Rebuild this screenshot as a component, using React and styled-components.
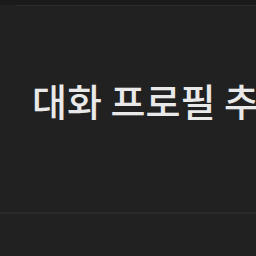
import styled, { createGlobalStyle } from "styled-components";

const Global = createGlobalStyle`
  html, body {
    margin: 0;
    padding: 0;
    background: #212121;
  }
`;

const Page = styled.div`
  width: 256px;
  height: 256px;
  overflow: hidden;
  display: flex;
  flex-direction: column;
  background: #212121;
`;

const TopStrip = styled.div`
  height: 5px;
  background: #1a1a1a;
`;

const TopRule = styled.div`
  height: 1px;
  margin-left: 16px;
  background: #2c2c2c;
`;

const Header = styled.div`
  height: 206px;
  display: flex;
  align-items: center;
  padding: 0 0 18px 32px;
  box-sizing: border-box;
`;

const Title = styled.h1`
  margin: 0;
  font-family: "Noto Sans CJK KR", "Noto Sans", sans-serif;
  font-size: 38px;
  font-weight: 500;
  color: #e9e9e9;
  white-space: nowrap;
  line-height: 1;
`;

const Divider = styled.div`
  height: 2px;
  background: #2a2a2a;
`;

const Footer = styled.div`
  flex: 1;
  background: #212121;
`;

export default function App() {
  return (
    <Page>
      <Global />
      <TopStrip />
      <TopRule />
      <Header>
        <Title>대화 프로필 추가</Title>
      </Header>
      <Divider />
      <Footer />
    </Page>
  );
}
